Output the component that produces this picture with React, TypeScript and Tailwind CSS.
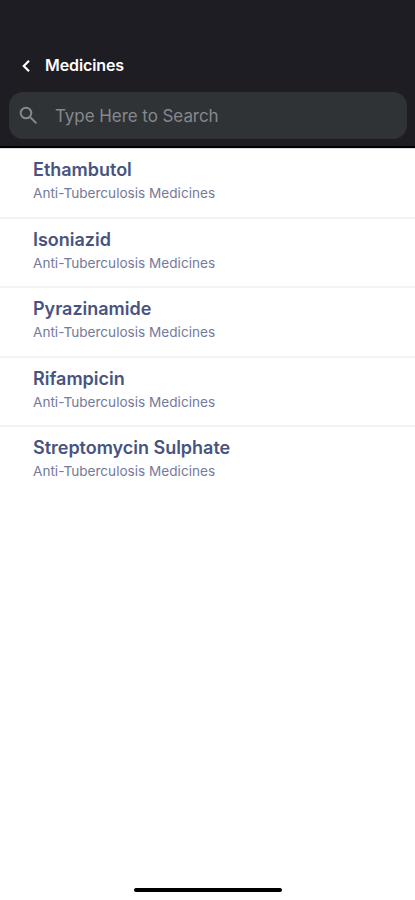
const medicines = ['Ethambutol', 'Isoniazid', 'Pyrazinamide', 'Rifampicin', 'Streptomycin Sulphate'];

export default function App() {
  return (
    <div className="flex h-[900px] w-full flex-col bg-white font-['Inter','Liberation_Sans',sans-serif]">
      <header className="flex h-[148px] shrink-0 flex-col border-b-2 border-black bg-[#1e1d23] pt-[53px]">
        <div className="flex h-6 items-center pl-[21px]">
          <button aria-label="Back" className="mt-[2px] flex w-6">
            <svg width="10" height="14" viewBox="0 0 10 14" fill="none" stroke="#fff" strokeWidth="2.2">
              <path d="M8 1.8 2.8 7 8 12.2" />
            </svg>
          </button>
          <h1 className="text-[16px] leading-6 font-semibold tracking-[-0.1px] whitespace-nowrap text-white">Medicines</h1>
        </div>
        <div className="mt-[15px] mr-2 ml-[9px] flex h-[47px] items-center rounded-[14px] bg-[#303336] pl-[10px]">
          <svg width="19" height="19" viewBox="0 0 19 19" fill="none" stroke="#85888e" strokeWidth="2">
            <circle cx="7" cy="7" r="5.3" />
            <path d="m11 11 6.4 6.4" />
          </svg>
          <span className="ml-[17px] text-[17px] leading-6 tracking-[-0.06px] whitespace-nowrap text-[#85888e]">Type Here to Search</span>
        </div>
      </header>
      <ul className="flex flex-col border-t border-[#d8d8da]">
        {medicines.map((name) => (
          <li key={name} className="h-[69.5px] border-b-2 border-[#f3f3f4] pt-[9px] pl-[33px] last:border-0">
            <h2 className="text-[18px] leading-[23px] font-semibold tracking-[-0.02px] whitespace-nowrap text-[#48547f]">{name}</h2>
            <p className="mt-px text-[13.6px] leading-[22px] whitespace-nowrap text-[#747a99]">Anti-Tuberculosis Medicines</p>
          </li>
        ))}
      </ul>
      <div className="mx-auto mt-auto mb-2 h-1 w-[148px] rounded-full bg-black" />
    </div>
  );
}
